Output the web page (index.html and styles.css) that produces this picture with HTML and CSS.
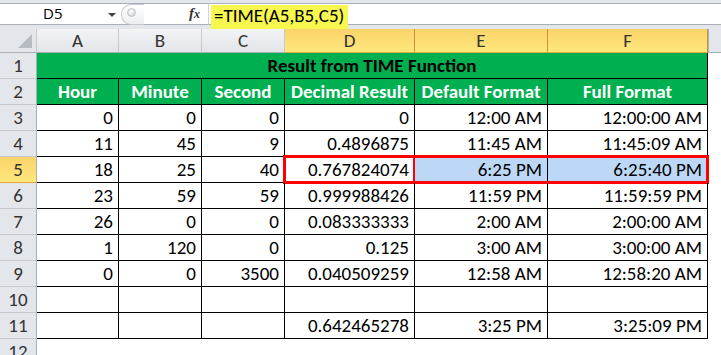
FILE: index.html
```html
<!DOCTYPE html>
<html lang="en">
<head>
    <meta charset="UTF-8">
    <title>TIME Function</title>
    <link rel="stylesheet" href="styles.css">
</head>
<body>
    <div class="formula-bar">
        <div class="name-box">D5<span class="caret"></span></div>
        <div class="splitter"><span class="dot"></span></div>
        <div class="fx">f<span>x</span></div>
        <div class="formula"><span class="hl">=TIME(A5,B5,C5)</span></div>
        <div class="bar-end"></div>
    </div>

    <div class="sheet">
        <!-- column headers -->
        <div class="corner"></div>
        <div class="col-h">A</div>
        <div class="col-h">B</div>
        <div class="col-h">C</div>
        <div class="col-h on">D</div>
        <div class="col-h on">E</div>
        <div class="col-h on">F</div>
        <div class="col-fill"></div>

        <div class="row-h">1</div>
        <div class="c title">Result from TIME Function</div>
        <div class="fill"></div>

        <div class="row-h">2</div>
        <div class="c head">Hour</div>
        <div class="c head">Minute</div>
        <div class="c head">Second</div>
        <div class="c head">Decimal Result</div>
        <div class="c head">Default Format</div>
        <div class="c head">Full Format</div>
        <div class="fill"></div>

        <div class="row-h">3</div>
        <div class="c">0</div><div class="c">0</div><div class="c">0</div>
        <div class="c">0</div><div class="c">12:00 AM</div><div class="c">12:00:00 AM</div>
        <div class="fill"></div>

        <div class="row-h">4</div>
        <div class="c">11</div><div class="c">45</div><div class="c">9</div>
        <div class="c">0.4896875</div><div class="c">11:45 AM</div><div class="c">11:45:09 AM</div>
        <div class="fill"></div>

        <div class="row-h on">5</div>
        <div class="c">18</div><div class="c">25</div><div class="c">40</div>
        <div class="c box">0.767824074</div><div class="c sel sel-l">6:25 PM</div><div class="c sel sel-r">6:25:40 PM</div>
        <div class="fill"></div>

        <div class="row-h">6</div>
        <div class="c">23</div><div class="c">59</div><div class="c">59</div>
        <div class="c">0.999988426</div><div class="c">11:59 PM</div><div class="c">11:59:59 PM</div>
        <div class="fill"></div>

        <div class="row-h">7</div>
        <div class="c">26</div><div class="c">0</div><div class="c">0</div>
        <div class="c">0.083333333</div><div class="c">2:00 AM</div><div class="c">2:00:00 AM</div>
        <div class="fill"></div>

        <div class="row-h">8</div>
        <div class="c">1</div><div class="c">120</div><div class="c">0</div>
        <div class="c">0.125</div><div class="c">3:00 AM</div><div class="c">3:00:00 AM</div>
        <div class="fill"></div>

        <div class="row-h">9</div>
        <div class="c">0</div><div class="c">0</div><div class="c">3500</div>
        <div class="c">0.040509259</div><div class="c">12:58 AM</div><div class="c">12:58:20 AM</div>
        <div class="fill"></div>

        <div class="row-h">10</div>
        <div class="c"></div><div class="c"></div><div class="c"></div>
        <div class="c"></div><div class="c"></div><div class="c"></div>
        <div class="fill"></div>

        <div class="row-h">11</div>
        <div class="c"></div><div class="c"></div><div class="c"></div>
        <div class="c">0.642465278</div><div class="c">3:25 PM</div><div class="c">3:25:09 PM</div>
        <div class="fill"></div>

        <div class="row-h">12</div>
        <div class="blank"></div>
    </div>
</body>
</html>
```

FILE: styles.css
```css
* { margin: 0; padding: 0; box-sizing: border-box; }
body { font-family: Carlito, Lato, sans-serif; background: #fff; color: #000; overflow: hidden; }

/* formula bar */
.formula-bar { display: flex; height: 29px; background: #e3e6ea; padding-top: 3px; border-bottom: 4px solid #e3e6ea; }
.name-box { position: relative; width: 118px; background: #fff; border-top: 1px solid #a9afb7; border-bottom: 1px solid #a9afb7; font-family: "Open Sans", sans-serif; font-size: 15px; line-height: 19px; padding-left: 43px; }
.caret { position: absolute; left: 108px; top: 9px; border-left: 4px solid transparent; border-right: 4px solid transparent; border-top: 4px solid #444; }
.splitter { width: 90px; background: #fff; border-top: 1px solid #a9afb7; border-bottom: 1px solid #a9afb7; position: relative; }
.splitter::before { content: ""; position: absolute; left: 3px; top: 0; width: 22px; height: 19px; border: 1px solid #c4c8cd; border-right: none; border-radius: 10px 0 0 10px; background: linear-gradient(#fff, #eceef0); }
.dot { position: absolute; left: 9px; top: 4px; width: 9px; height: 9px; border-radius: 50%; background: radial-gradient(circle at 40% 35%, #fff, #c9ccd0); border: 1px solid #c0c4c9; }
.fx { position: absolute; left: 189px; top: 5px; font-family: "Liberation Serif", serif; font-style: italic; font-weight: bold; font-size: 15px; color: #333; }
.fx span { font-size: 12px; }
.formula { flex: none; width: 510px; background: #fff; border-top: 1px solid #a9afb7; border-bottom: 1px solid #a9afb7; border-left: 1px solid #d0d3d7; font-size: 19px; }
.formula .hl { display: inline-block; background: #f7f74f; padding: 0 4px 0 3px; margin-left: 2px; height: 25px; line-height: 22px; margin-top: -1px; }
.bar-end { flex: 1; background: #fff; border-top: 1px solid #a9afb7; border-bottom: 1px solid #a9afb7; }

/* grid */
.sheet { display: grid; grid-template-columns: 37px 82px 83px 83px 130px 133px 160px 1fr; grid-template-rows: 24px repeat(12, 26px); font-size: 19px; }
.corner { background: #e3e6ea; border-right: 1px solid #c5c9ce; border-bottom: 1px solid #a9afb7; position: relative; }
.corner::after { content: ""; position: absolute; right: 4px; bottom: 4px; border-left: 14px solid transparent; border-bottom: 14px solid #b7bcc2; }
.col-h { background: linear-gradient(#f2f3f5, #e2e5e9); border-right: 1px solid #c5c9ce; border-bottom: 1px solid #a9afb7; text-align: center; line-height: 23px; color: #333; font-size: 19px; }
.col-h.on { background: linear-gradient(#fad36a, #ffe87c); border-right-color: #c9923c; border-bottom-color: #e3a73a; }
.col-fill { background: #e3e6ea; border-bottom: 1px solid #a9afb7; border-left: 1px solid #a9afb7; }
.row-h { background: #e3e6ea; border-right: 1px solid #a9afb7; border-bottom: 1px solid #c5c9ce; text-align: center; line-height: 26px; color: #333; }
.row-h.on { background: linear-gradient(#fad36a, #ffe87c); border-bottom-color: #e3a73a; }

.c { position: relative; border-right: 1px solid #000; border-bottom: 1px solid #000; text-align: right; padding-right: 5px; line-height: 25px; white-space: nowrap; }
.title { grid-column: span 6; background: #00b050; text-align: center; font-weight: bold; padding-right: 0; }
.head { background: #00b050; color: #fff; text-align: center; font-weight: bold; padding-right: 0; }
.fill, .blank { background: #fff; }
.blank { grid-column: span 7; }

/* selection highlight */
.sel { background: #bcd8f6; }
.box::after, .sel::after { content: ""; position: absolute; top: -2px; bottom: -2px; left: -2px; right: -2px; border: 3px solid #ff0000; }
.sel-l::after { border-left: none; border-right: none; left: 0; right: -1px; }
.sel-r::after { border-left: none; left: 0; }
```
